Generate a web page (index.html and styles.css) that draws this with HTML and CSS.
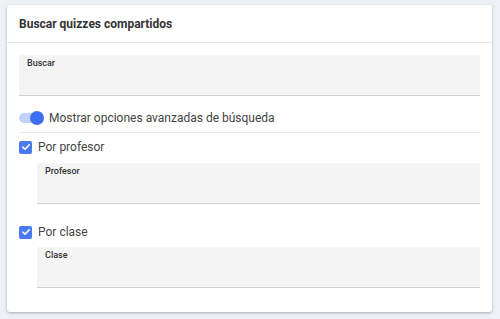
FILE: index.html
```html
<!DOCTYPE html>
<html lang="es">
<head>
  <meta charset="UTF-8" />
  <title>Buscar quizzes compartidos</title>
  <link rel="stylesheet" href="styles.css">
</head>
<body>
  <div class="card">
    <div class="card-header">Buscar quizzes compartidos</div>
    <div class="card-body">
      <div class="field">
        <label>Buscar</label>
      </div>

      <div class="toggle-row">
        <span class="toggle"><span class="thumb"></span></span>
        <span>Mostrar opciones avanzadas de búsqueda</span>
      </div>

      <hr class="sep" />

      <div class="check-row">
        <span class="check">
          <svg viewBox="0 0 12 12" width="12" height="12"><path d="M2.8 6.2 L5 8.2 L9.3 3.8" fill="none" stroke="#fff" stroke-width="1.6" stroke-linecap="round" stroke-linejoin="round"/></svg>
        </span>
        <span>Por profesor</span>
      </div>
      <div class="field sub">
        <label>Profesor</label>
      </div>

      <div class="check-row second">
        <span class="check">
          <svg viewBox="0 0 12 12" width="12" height="12"><path d="M2.8 6.2 L5 8.2 L9.3 3.8" fill="none" stroke="#fff" stroke-width="1.6" stroke-linecap="round" stroke-linejoin="round"/></svg>
        </span>
        <span>Por clase</span>
      </div>
      <div class="field sub last">
        <label>Clase</label>
      </div>
    </div>
  </div>
</body>
</html>
```

FILE: styles.css
```css
body {
  margin: 0;
  padding: 5px 8px 7px 7px;
  background-color: #edf0f4;
  font-family: Roboto, "Liberation Sans", sans-serif;
  color: #444;
}
.card {
  background-color: #fff;
  border-radius: 3px;
  box-shadow: 0 1px 3px rgba(0, 0, 0, 0.28);
  height: 307px;
  box-sizing: border-box;
}
.card-header {
  height: 38px;
  box-sizing: border-box;
  padding: 0 12px;
  display: flex;
  align-items: center;
  font-size: 12px;
  font-weight: 700;
  color: #333;
  border-bottom: 1px solid #e4e4e4;
}
.card-body {
  padding: 12px 12px 0 12px;
  display: flex;
  flex-direction: column;
}
.field {
  height: 41px;
  box-sizing: border-box;
  background-color: #f4f4f4;
  border-bottom: 1px solid #cfcfcf;
  border-radius: 2px 2px 0 0;
  padding: 3px 8px;
}
.field label {
  display: block;
  font-size: 9px;
  line-height: 11px;
  font-weight: 500;
  color: #333;
}
.field.sub {
  margin-left: 18px;
  margin-top: 5px;
}
.field.sub.last {
  margin-top: 4px;
}
.toggle-row {
  margin-top: 10px;
  height: 24px;
  display: flex;
  align-items: center;
  gap: 9px;
  font-size: 12px;
}
.toggle {
  position: relative;
  width: 21px;
  height: 10px;
  border-radius: 5px;
  background-color: #c3d1f8;
}
.toggle .thumb {
  position: absolute;
  right: -4px;
  top: -2px;
  width: 14px;
  height: 14px;
  border-radius: 50%;
  background-color: #3d6ef2;
}
.sep {
  border: none;
  border-top: 1px solid #e6e6e6;
  margin: 2px 0 0 0;
}
.check-row {
  margin-top: 3px;
  height: 22px;
  display: flex;
  align-items: center;
  gap: 6px;
  font-size: 12px;
}
.check-row.second {
  margin-top: 17px;
}
.check {
  width: 13px;
  height: 13px;
  border-radius: 2px;
  background-color: #4a7af3;
  display: flex;
  align-items: center;
  justify-content: center;
}
```
